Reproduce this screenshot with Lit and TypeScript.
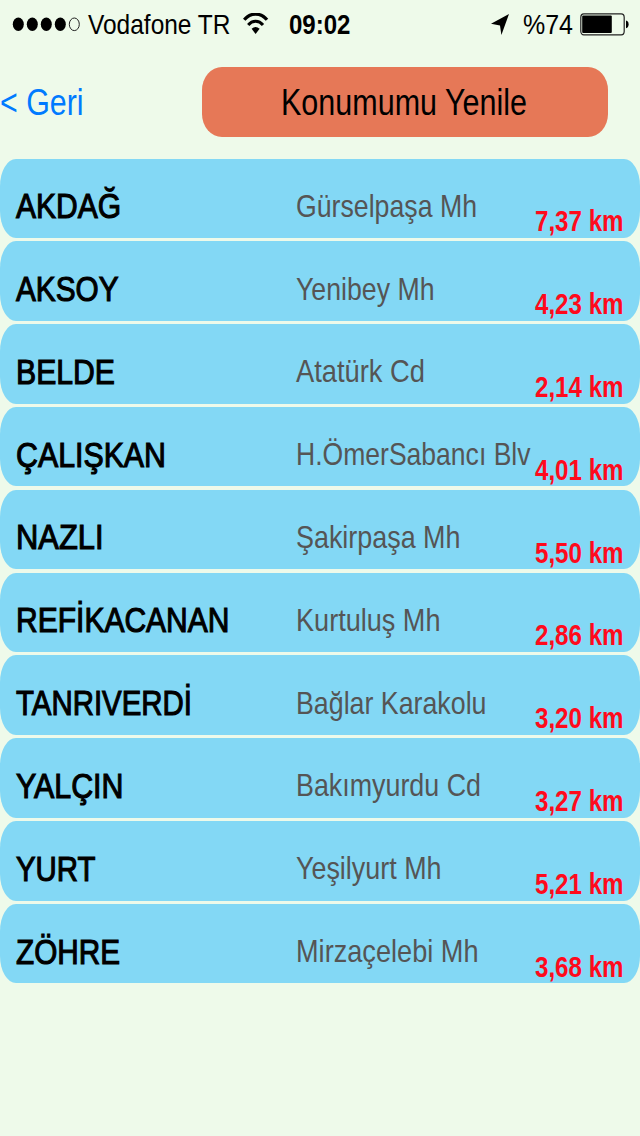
import { LitElement, html, svg, css } from "lit";
import { customElement, property } from "lit/decorators.js";

/** A single line of text condensed to an exact width; `stroke` thickens it to a medium weight. */
@customElement("fit-label")
class FitLabel extends LitElement {
  @property() text = "";
  @property({ type: Number }) w = 100;
  @property({ type: Number }) size = 30;
  @property({ type: Number }) weight = 400;
  @property({ type: Number }) stroke = 0;
  static styles = css`
    :host { display: block; }
    svg { display: block; overflow: visible; }
    text { font-family: "Liberation Sans", Arial, sans-serif; fill: currentColor; stroke: currentColor; }
  `;
  render() {
    const h = Math.round(this.size);
    return html`<svg width=${this.w} height=${h}>
      ${svg`<text x="0" y=${h} font-size=${this.size} font-weight=${this.weight} stroke-width=${this.stroke} textLength=${this.w} lengthAdjust="spacingAndGlyphs">${this.text}</text>`}
    </svg>`;
  }
}

const ROWS: [string, number, string, number, string][] = [
  ["AKDAĞ", 105, "Gürselpaşa Mh", 181, "7,37 km"],
  ["AKSOY", 102.5, "Yenibey Mh", 138.5, "4,23 km"],
  ["BELDE", 99, "Atatürk Cd", 129, "2,14 km"],
  ["ÇALIŞKAN", 150, "H.ÖmerSabancı Blv", 234.5, "4,01 km"],
  ["NAZLI", 87.5, "Şakirpaşa Mh", 164.5, "5,50 km"],
  ["REFİKACANAN", 213.5, "Kurtuluş Mh", 144.5, "2,86 km"],
  ["TANRIVERDİ", 176, "Bağlar Karakolu", 190.5, "3,20 km"],
  ["YALÇIN", 107.5, "Bakımyurdu Cd", 185, "3,27 km"],
  ["YURT", 79.5, "Yeşilyurt Mh", 145.5, "5,21 km"],
  ["ZÖHRE", 104, "Mirzaçelebi Mh", 182.5, "3,68 km"],
];

@customElement("app-root")
class AppRoot extends LitElement {
  static styles = css`
    :host { display: block; width: 640px; height: 1136px; overflow: hidden; background: #eefaea; color: #000; }
    .status { display: flex; align-items: flex-start; height: 50px; box-sizing: border-box; padding: 5px 11px 0 12px; }
    .status svg { display: block; flex: none; }
    .dots { margin: 12px 7px 0 0; }
    .wifi { margin: 8px 0 0 12px; }
    .time { margin-left: 20px; }
    .arrow { margin: 9px 14px 0 auto; }
    .battery { margin: 8px 0 0 7px; }
    .bar { display: flex; height: 108.6px; box-sizing: border-box; padding: 16.5px 32px 0 0; justify-content: space-between; align-items: flex-start; }
    .back { color: #007aff; padding-top: 11.5px; }
    .refresh { display: flex; justify-content: center; width: 406px; height: 70.5px; box-sizing: border-box; padding: 11.5px 2px 0 0; border-radius: 20px / 23px; background: #e67857; }
    .list { display: flex; flex-direction: column; gap: 3.4px; }
    .row { display: grid; grid-template-columns: 280.2px 238.8px 1fr; height: 79.43px; padding-left: 15.8px; box-sizing: border-box; border-radius: 16px / 27px; background: #83d8f5; }
    .name { padding-top: 23.6px; }
    .place { padding-top: 27.1px; color: #555; }
    .dist { padding-top: 43.7px; color: #ff0a1c; }
  `;
  render() {
    return html`
      <div class="status">
        <svg class="dots" width="69" height="16">
          ${[0, 1, 2, 3].map((i) => svg`<ellipse cx=${6.3 + i * 14} cy="7.3" rx="5.5" ry="6.8"/>`)}
          <ellipse cx="62.3" cy="7.3" rx="5" ry="6.3" fill="none" stroke="#222" stroke-width="1"/>
        </svg>
        <fit-label text="Vodafone TR" w="142.5" size="28.5"></fit-label>
        <svg class="wifi" width="26" height="23" fill="none" stroke="#000">
          <path d="M1.2 6.8C7.5-.8 17.7-.8 24 6.8" stroke-width="3.2"/>
          <path d="M5.2 12C9.3 7 15.9 7 20 12" stroke-width="3"/>
          <path d="M8.6 15.8Q12.6 12 16.6 15.8L12.6 21Z" fill="#000" stroke="none"/>
        </svg>
        <fit-label class="time" text="09:02" w="61.5" size="28.5" weight="700"></fit-label>
        <svg class="arrow" width="18" height="22"><path d="M18 0L10.4 21L9 11.4L0 9.8Z"/></svg>
        <fit-label text="%74" w="50" size="28.5"></fit-label>
        <svg class="battery" width="49" height="24">
          <rect x=".8" y=".8" width="43.4" height="21" rx="3" ry="3.6" fill="none" stroke="#222" stroke-width="1.2"/>
          <rect x="2.2" y="2.5" width="29.6" height="17.6" rx="1"/>
          <path d="M46 7.5Q48.6 8 48.6 11.3T46 15.2Z"/>
        </svg>
      </div>
      <div class="bar">
        <fit-label class="back" text="&lt; Geri" w="83.5" size="36.8"></fit-label>
        <div class="refresh"><fit-label text="Konumumu Yenile" w="246" size="36.8"></fit-label></div>
      </div>
      <div class="list">
        ${ROWS.map(([name, nw, place, pw, dist]) => html`
          <div class="row">
            <fit-label class="name" text=${name} w=${nw} size="35.9" stroke="1.15"></fit-label>
            <fit-label class="place" text=${place} w=${pw} size="31.2"></fit-label>
            <fit-label class="dist" text=${dist} w="88.5" size="29" weight="700"></fit-label>
          </div>`)}
      </div>
    `;
  }
}
